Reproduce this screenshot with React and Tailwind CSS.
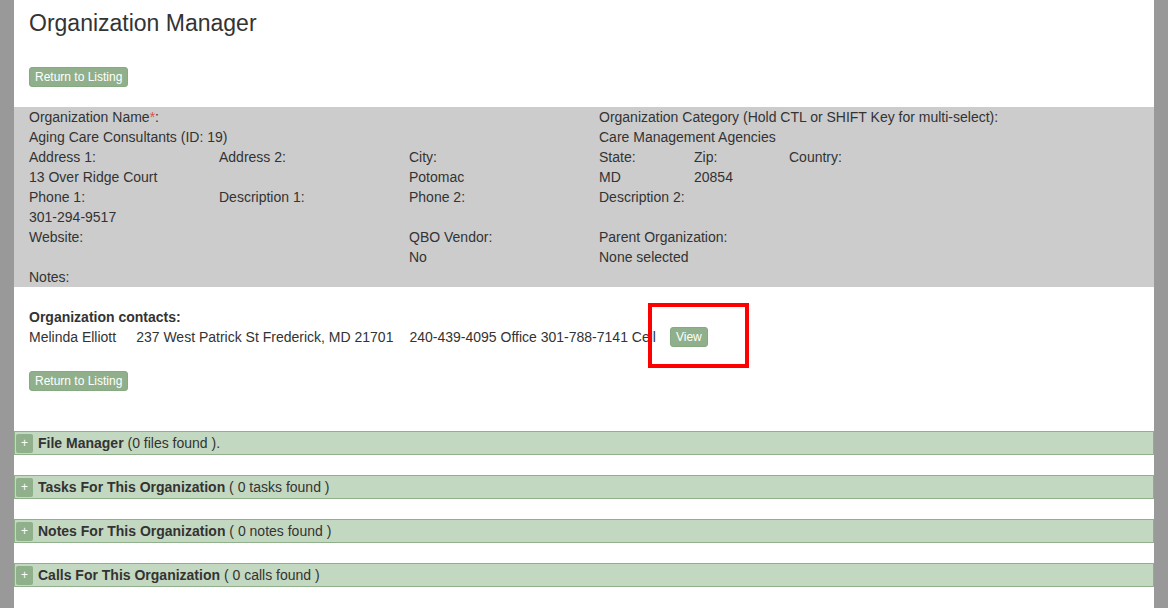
import React from 'react';

const font = { fontFamily: '"Liberation Sans", Arial, sans-serif' };

const GreenButton = ({ children, className = '' }) => (
  <button className={`h-[20px] px-[5px] bg-[#8fb08a] text-white text-[12px] leading-[18px] rounded-[3px] border border-[#86a882] ${className}`}>
    {children}
  </button>
);

const Cell = ({ children, className = '' }) => (
  <div className={`h-[20px] leading-[20px] whitespace-nowrap ${className}`}>{children}</div>
);

const Section = ({ title, count }) => (
  <div className="h-[24px] bg-[#c3d8c0] border border-[#8fb08a] flex items-center mb-[20px]">
    <span className="ml-[1px] w-[17px] h-[19px] bg-[#8fb08a] text-white text-[12px] leading-[19px] text-center rounded-[2px]">+</span>
    <span className="ml-[5px] text-[14px] leading-[20px] text-[#333]">
      <b>{title}</b> {count}
    </span>
  </div>
);

export default function App() {
  return (
    <div style={font} className="w-[1168px] h-[608px] bg-[#999] flex overflow-hidden text-[#333] text-[14px]">
      <div className="mx-[14px] flex-1 bg-white relative">
        <h1 className="pl-[15px] pt-[9px] h-[66px] text-[23px] leading-[28px] text-[#333]">Organization Manager</h1>
        <div className="pl-[15px] h-[20px]">
          <GreenButton>Return to Listing</GreenButton>
        </div>
        <div className="mt-[21px] bg-[#cccccc] h-[180px] flex">
          <div className="w-[190px] pl-[15px]">
            <Cell>Organization Name<span className="text-[#d9534f]">*</span>:</Cell>
            <Cell className="overflow-visible">Aging Care Consultants (ID: 19)</Cell>
            <Cell>Address 1:</Cell>
            <Cell>13 Over Ridge Court</Cell>
            <Cell>Phone 1:</Cell>
            <Cell>301-294-9517</Cell>
            <Cell>Website:</Cell>
            <Cell></Cell>
            <Cell>Notes:</Cell>
          </div>
          <div className="w-[190px] pl-[15px]">
            <Cell></Cell>
            <Cell></Cell>
            <Cell>Address 2:</Cell>
            <Cell></Cell>
            <Cell>Description 1:</Cell>
          </div>
          <div className="w-[190px] pl-[15px]">
            <Cell></Cell>
            <Cell></Cell>
            <Cell>City:</Cell>
            <Cell>Potomac</Cell>
            <Cell>Phone 2:</Cell>
            <Cell></Cell>
            <Cell>QBO Vendor:</Cell>
            <Cell>No</Cell>
          </div>
          <div className="pl-[15px] flex-1">
            <Cell>Organization Category (Hold CTL or SHIFT Key for multi-select):</Cell>
            <Cell>Care Management Agencies</Cell>
            <div className="flex">
              <div className="w-[95px]">
                <Cell>State:</Cell>
                <Cell>MD</Cell>
              </div>
              <div className="w-[95px]">
                <Cell>Zip:</Cell>
                <Cell>20854</Cell>
              </div>
              <div className="w-[95px]">
                <Cell>Country:</Cell>
                <Cell></Cell>
              </div>
            </div>
            <Cell>Description 2:</Cell>
            <Cell></Cell>
            <Cell>Parent Organization:</Cell>
            <Cell>None selected</Cell>
          </div>
        </div>
        <div className="pl-[15px] pt-[20px]">
          <Cell className="font-bold">Organization contacts:</Cell>
          <div className="flex items-center h-[20px]">
            <span>Melinda Elliott</span>
            <span className="ml-[20px]">237 West Patrick St Frederick, MD 21701</span>
            <span className="ml-[16px]">240-439-4095 Office 301-788-7141 Cell</span>
            <GreenButton className="ml-[14px]">View</GreenButton>
          </div>
          <div className="pt-[23px] h-[43px]">
            <GreenButton>Return to Listing</GreenButton>
          </div>
        </div>
        <div className="mt-[41px]">
          <Section title="File Manager" count="(0 files found )." />
          <Section title="Tasks For This Organization" count="( 0 tasks found )" />
          <Section title="Notes For This Organization" count="( 0 notes found )" />
          <Section title="Calls For This Organization" count="( 0 calls found )" />
        </div>
        <div className="absolute left-[634px] top-[303px] w-[101px] h-[65px] border-[4px] border-[#ff0000]"></div>
      </div>
    </div>
  );
}
